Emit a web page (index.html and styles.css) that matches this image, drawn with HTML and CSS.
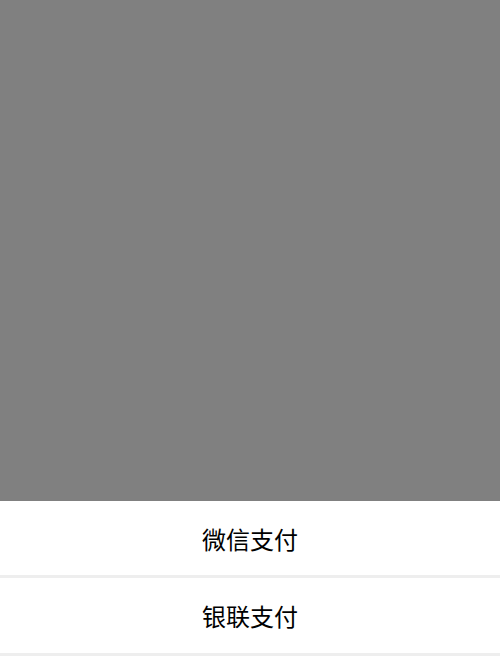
FILE: index.html
```html
<!DOCTYPE html>
<html lang="zh-CN">
<head>
<meta charset="utf-8">
<title>支付方式</title>
<link rel="stylesheet" href="styles.css">
</head>
<body>
<div class="page">
  <div class="mask"></div>
  <div class="sheet">
    <div class="item">微信支付</div>
    <div class="item">银联支付</div>
  </div>
</div>
</body>
</html>
```

FILE: styles.css
```css
html, body {
  margin: 0;
  padding: 0;
  background: #ffffff;
}
.page {
  width: 500px;
  height: 656px;
  display: flex;
  flex-direction: column;
  overflow: hidden;
  font-family: "Noto Sans CJK SC", "Noto Sans", sans-serif;
}
.mask {
  height: 501px;
  flex: 0 0 auto;
  background: #808080;
}
.sheet {
  display: flex;
  flex-direction: column;
  background: #ffffff;
}
.item {
  height: 74px;
  border-bottom: 3px solid #eeeeee;
  display: flex;
  align-items: center;
  justify-content: center;
  font-size: 24px;
  color: #000000;
}
.item + .item {
  height: 75px;
}
```
